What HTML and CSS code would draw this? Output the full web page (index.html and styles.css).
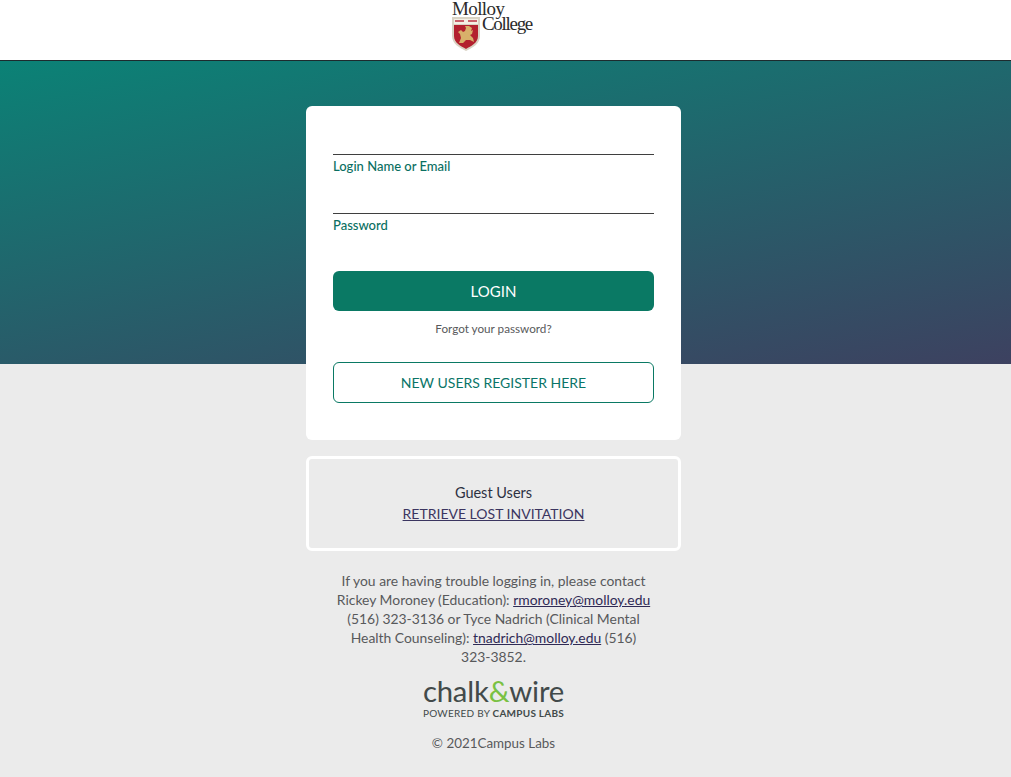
FILE: index.html

```html
<!DOCTYPE html>
<html lang="en">
<head>
  <meta charset="UTF-8" />
  <title>Molloy College Login</title>
  <link rel="stylesheet" href="styles.css">
</head>
<body>
  <header class="topbar">
    <div class="logo">
      <div class="logo-molloy">Molloy</div>
      <div class="logo-row">
        <svg class="shield" width="28" height="34" viewBox="0 0 28 34">
          <path d="M0 0H28V19C28 27 20 31 14 34C8 31 0 27 0 19Z" fill="#d9d3c4"/>
          <path d="M2 2H26V7H2Z" fill="#f4efe4"/>
          <path d="M3 3H12V5H3ZM16 3H25V5H16Z" fill="#c9606a"/>
          <path d="M2 8H26V19C26 26 19 29 14 32C9 29 2 26 2 19Z" fill="#b3202e"/>
          <path d="M7 26L9 21L8 17L6 15L9 13L11 15L13 14L14 11L13 9L17 9L20 11L19 14L21 13L20 17L18 18L21 21L22 25L18 23L14 23L11 26Z" fill="#d8b06a"/>
        </svg>
        <div class="logo-college">College</div>
      </div>
    </div>
  </header>

  <div class="hero"></div>

  <main class="content">
    <div class="card">
      <div class="field">
        <div class="field-line"></div>
        <label>Login Name or Email</label>
      </div>
      <div class="field">
        <div class="field-line"></div>
        <label>Password</label>
      </div>
      <button class="btn-login">LOGIN</button>
      <a class="forgot">Forgot your password?</a>
      <a class="btn-register">NEW USERS REGISTER HERE</a>
    </div>

    <div class="guest">
      <div>Guest Users</div>
      <a class="guest-link">RETRIEVE LOST INVITATION</a>
    </div>

    <p class="help">If you are having trouble logging in, please contact Rickey Moroney (Education): <a>rmoroney@molloy.edu</a> (516) 323-3136 or Tyce Nadrich (Clinical Mental Health Counseling): <a>tnadrich@molloy.edu</a> (516) <span class="phone">323-3852.</span></p>

    <div class="brand">
      <div class="brand-name">chalk<span class="amp">&amp;</span>wire</div>
      <div class="brand-sub">POWERED BY <b>CAMPUS LABS</b></div>
    </div>
    <div class="copyright">© 2021Campus Labs</div>
  </main>
</body>
</html>
```

FILE: styles.css

```css
html, body {
  margin: 0;
  padding: 0;
}
body {
  font-family: 'Lato', 'Open Sans', sans-serif;
  background: #ebebeb;
  color: #58595b;
  min-height: 777px;
  overflow: hidden;
}
.topbar {
  height: 60px;
  background: #fff;
  border-bottom: 1px solid #1d2b2e;
  display: flex;
  justify-content: center;
  padding-right: 26px;
}
.logo {
  width: 81px;
  font-family: 'Liberation Serif', serif;
  color: #2b2b2b;
}
.logo-molloy {
  font-size: 19px;
  line-height: 17px;
  letter-spacing: -0.6px;
}
.logo-row {
  display: flex;
  align-items: flex-start;
}
.shield {
  flex-shrink: 0;
}
.logo-college {
  font-size: 19px;
  line-height: 18px;
  letter-spacing: -1.3px;
  margin-left: 2px;
  margin-top: -2px;
}
.hero {
  height: 303px;
  background: linear-gradient(169deg, #0b8276, #3d4160);
}
.content {
  width: 375px;
  margin: -258px 0 0 306px;
}
.card {
  background: #fff;
  border-radius: 6px;
  padding: 48px 27px 37px;
  height: 334px;
  box-sizing: border-box;
}
.field {
  margin-bottom: 39px;
}
.field + .field {
  margin-bottom: 38px;
}
.field-line {
  border-top: 1px solid #3f3f3f;
}
.field label {
  display: block;
  margin-top: 3px;
  font-size: 13px;
  line-height: 16px;
  font-weight: 500;
  color: #0a6f62;
}
.btn-login {
  display: block;
  width: 100%;
  height: 40px;
  background: #0a7964;
  color: #fff;
  border: none;
  border-radius: 6px;
  font-family: inherit;
  font-size: 15px;
}
.forgot {
  display: block;
  margin-top: 9px;
  text-align: center;
  font-size: 11.7px;
  line-height: 16px;
  color: #58595b;
}
.btn-register {
  display: block;
  margin-top: 26px;
  height: 41px;
  line-height: 39px;
  box-sizing: border-box;
  border: 1px solid #0a7964;
  border-radius: 6px;
  text-align: center;
  font-size: 14px;
  color: #0a7568;
}
.guest {
  margin-top: 16px;
  height: 95px;
  box-sizing: border-box;
  border: 3px solid #fff;
  border-radius: 6px;
  padding-top: 23px;
  text-align: center;
  font-size: 14.5px;
  line-height: 21px;
  color: #2d3142;
}
.guest-link {
  display: block;
  font-size: 14px;
  color: #3b3560;
  text-decoration: underline;
}
.help {
  margin: 20px 27px 0;
  text-align: center;
  font-size: 13.9px;
  line-height: 19px;
  color: #58595b;
}
.help a {
  color: #2f2a55;
  text-decoration: underline;
}
.phone {
  white-space: nowrap;
}
.brand {
  margin-top: 10px;
  text-align: center;
}
.brand-name {
  font-size: 29.3px;
  line-height: 30px;
  color: #424a4a;
  letter-spacing: -0.2px;
}
.amp {
  color: #7ac143;
}
.brand-sub {
  font-size: 10px;
  line-height: 12px;
  margin-top: 1px;
  letter-spacing: 0.25px;
  color: #424a4a;
}
.copyright {
  margin-top: 16px;
  text-align: center;
  font-size: 13.4px;
  line-height: 16px;
  color: #58595b;
}
```
